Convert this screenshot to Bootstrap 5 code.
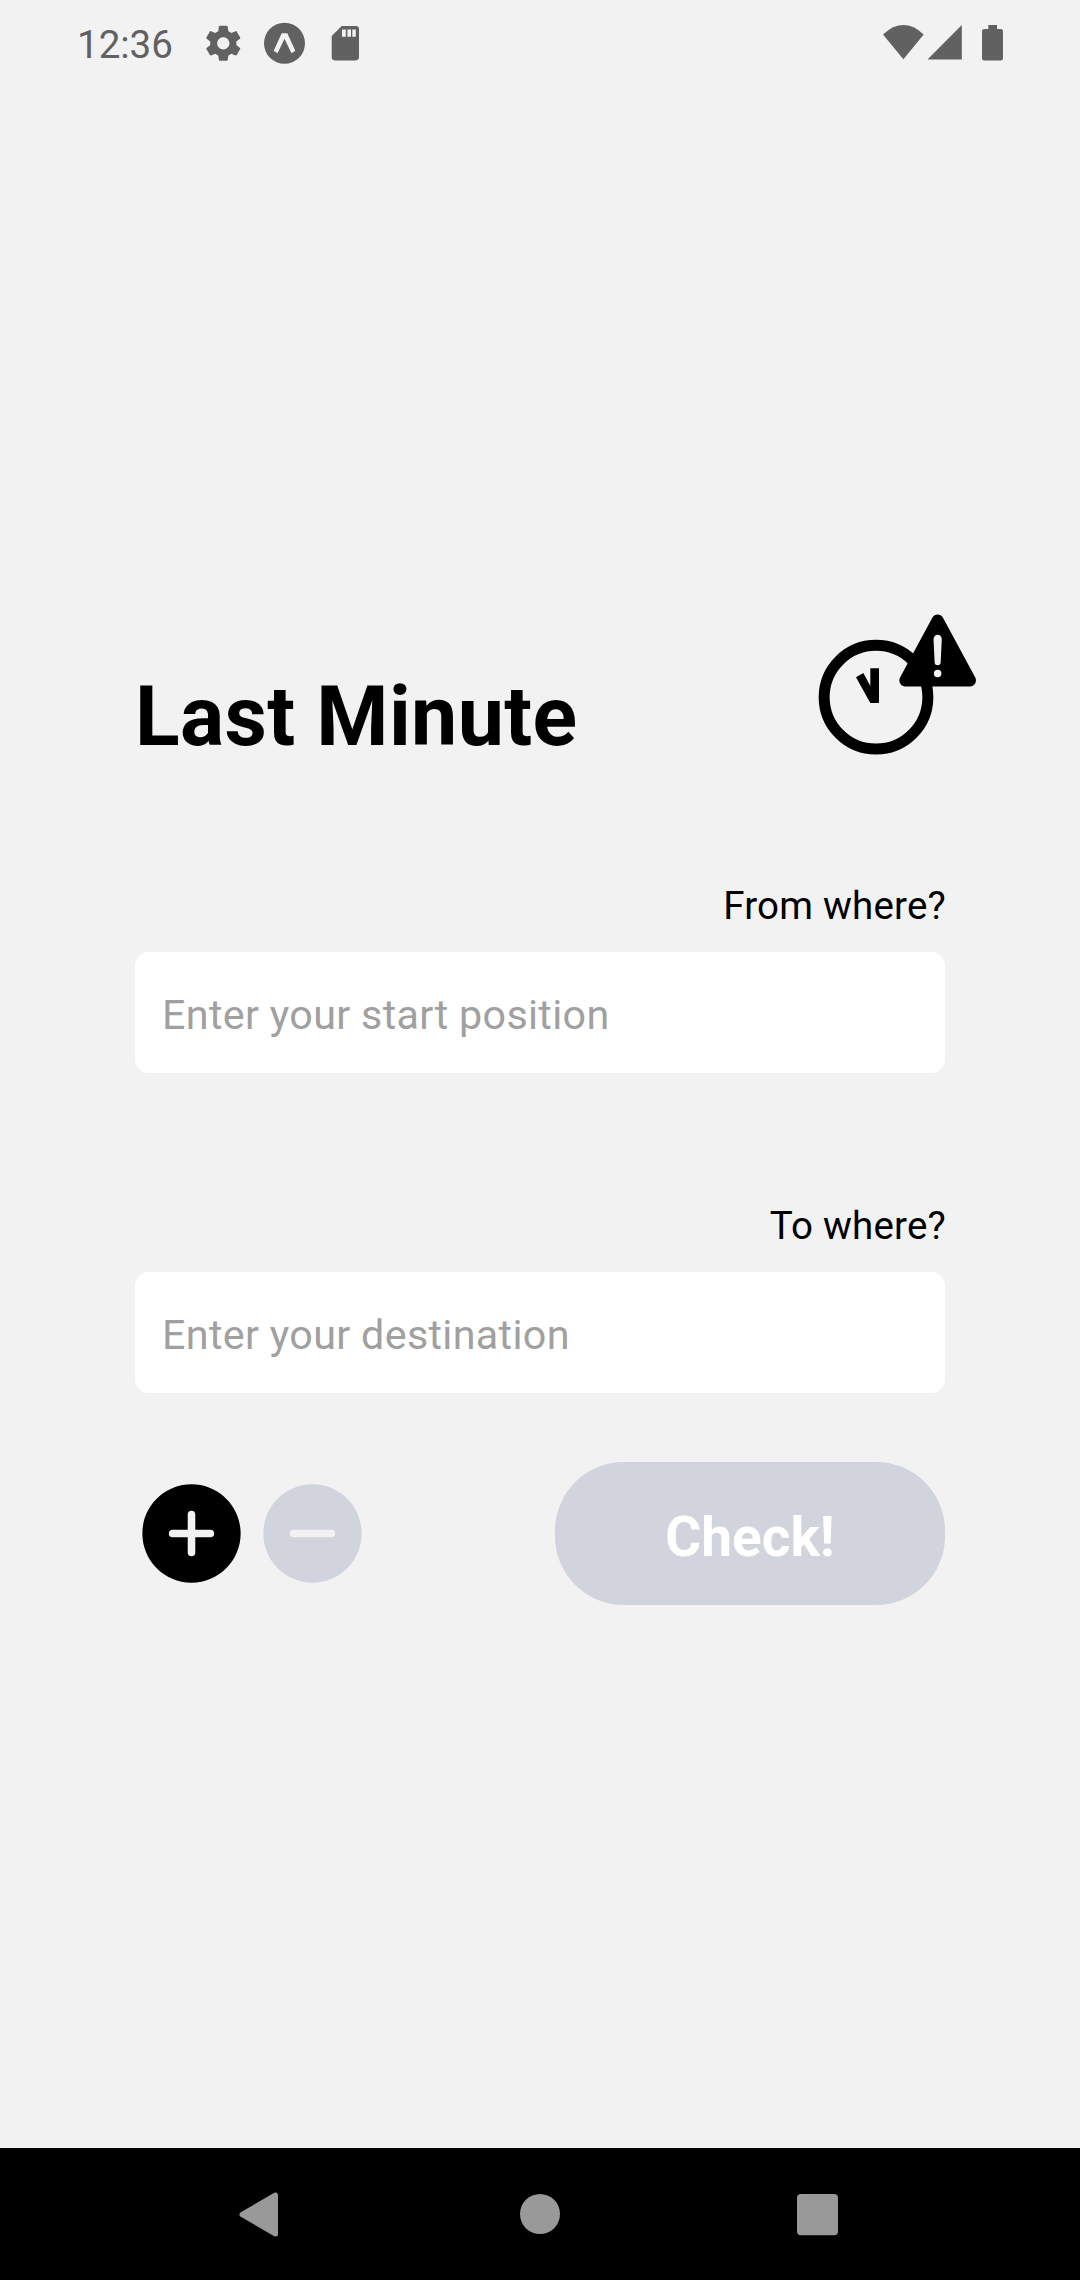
<!DOCTYPE html>
<html lang="en">
<head>
<meta charset="utf-8">
<meta name="viewport" content="width=device-width, initial-scale=1">
<title>Last Minute</title>
<link href="https://cdn.jsdelivr.net/npm/bootstrap@5.3.0/dist/css/bootstrap.min.css" rel="stylesheet">
<style>
  body { background: #f2f2f2; color: #000; font-family: Roboto, "Noto Sans", sans-serif; height: 2280px; overflow: hidden; }
  svg { display: block; flex: none; }
  .status-bar { height: 88px; color: #616161; padding: 0 60px 0 77px; }
  .status-clock { font-size: 38.5px; line-height: 90px; width: 123px; }
  .planner { width: 810px; margin: 0 auto; padding-top: 502px; }
  .app-title { font-size: 82.5px; font-weight: 700; line-height: 97px; letter-spacing: .35px; margin: 78px 0 0; }
  .app-logo { margin-right: -55px; }
  .field-label { font-size: 38.5px; line-height: 46px; letter-spacing: .2px; margin-right: -1px; }
  .field-input.form-control { height: 121px; border: 0; border-radius: 13.75px; padding: 4px 27px 0; font-size: 41.25px; letter-spacing: .33px; background: #fff; margin-top: 23px; }
  .field-input::placeholder { color: #a0a0a0; opacity: 1; }
  .first-field { margin-top: 103px; }
  .next-field { margin-top: 130px; }
  .action-row { margin-top: 69px; }
  .round-btn { width: 121px; height: 121px; color: #000; }
  .round-btn:disabled { color: #d1d4dc; opacity: 1; border: 0; }
  .round-pair { margin-left: -4px; }
  .check-btn.btn { width: 390px; height: 143px; border: 0; border-radius: 68.75px; font-size: 55px; font-weight: 700; line-height: 64px; padding: 7px 0 0; }
  .check-btn.btn:disabled { background: #d1d4dc; color: #fff; opacity: 1; }
  .nav-keys { height: 132px; background: #000; color: #999; }
</style>
</head>
<body class="d-flex flex-column">
  <header class="status-bar d-flex justify-content-between">
    <div class="d-flex">
      <span class="status-clock">12:36</span>
      <svg width="180" height="88" viewBox="200 0 180 88" fill="currentColor" aria-hidden="true">
        <path transform="translate(202.3 22.3) scale(1.75)" d="M19.43 12.98c.04-.32.07-.64.07-.98s-.03-.66-.07-.98l2.11-1.65c.19-.15.24-.42.12-.64l-2-3.46c-.12-.22-.39-.3-.61-.22l-2.49 1c-.52-.4-1.08-.73-1.69-.98l-.38-2.65C14.46 2.18 14.25 2 14 2h-4c-.25 0-.46.18-.49.42l-.38 2.65c-.61.25-1.17.59-1.69.98l-2.49-1c-.23-.09-.49 0-.61.22l-2 3.46c-.13.22-.07.49.12.64l2.11 1.65c-.04.32-.07.65-.07.98s.03.66.07.98l-2.11 1.65c-.19.15-.24.42-.12.64l2 3.46c.12.22.39.3.61.22l2.49-1c.52.4 1.08.73 1.69.98l.38 2.65c.03.24.24.42.49.42h4c.25 0 .46-.18.49-.42l.38-2.65c.61-.25 1.17-.59 1.69-.98l2.49 1c.23.09.49 0 .61-.22l2-3.46c.12-.22.07-.49-.12-.64l-2.11-1.65zM12 15.5c-1.93 0-3.5-1.57-3.5-3.5s1.57-3.5 3.5-3.5 3.5 1.57 3.5 3.5-1.57 3.5-3.5 3.5z"/>
        <circle cx="284.5" cy="43.3" r="20.5"/>
        <path fill="#f2f2f2" d="M281.7 33.3h5.6l8 17.4-3.8 2.6-7-14.5-7 14.5-3.8-2.6z"/>
        <path fill-rule="evenodd" d="M341.7 26h14a3.3 3.3 0 0 1 3.3 3.3v27.8a3.3 3.3 0 0 1-3.3 3.3h-20.7a3.3 3.3 0 0 1-3.3-3.3v-21.1zM342 29.5v7.2h3.8v-7.2zM347.4 29.5v7.2h3.6v-7.2zM352.3 29.5v7.2h3.5v-7.2z"/>
      </svg>
    </div>
    <svg width="160" height="88" viewBox="860 0 160 88" fill="currentColor" aria-hidden="true">
      <path d="M903.4 59.2 883 34.4q20.4-18.8 40.7 0z"/>
      <path d="M927.5 59.5 961.8 25v34.500z"/>
      <path d="M988.3 25h8.7v4h3.7a2.3 2.3 0 0 1 2.3 2.3v27a2.3 2.3 0 0 1-2.3 2.3h-16.4a2.3 2.3 0 0 1-2.3-2.3v-27a2.3 2.3 0 0 1 2.3-2.3h4z"/>
    </svg>
  </header>

  <main class="planner flex-grow-1">
    <div class="d-flex justify-content-between align-items-start">
      <h1 class="app-title">Last Minute</h1>
      <svg class="app-logo" width="210" height="190" viewBox="0 0 630 570" aria-hidden="true">
        <circle cx="258" cy="321.5" r="155.5" fill="none" stroke="#000" stroke-width="33"/>
        <path d="M241 235h26v104h-26l-43-77 22-13 21 39z"/>
        <path transform="translate(300.7 36) scale(.568)" d="M449.07 399.08L278.64 82.58c-12.08-22.44-44.26-22.44-56.35 0L51.87 399.08A32 32 0 0080 446.25h340.89a32 32 0 0028.18-47.17z"/>
        <path fill="#f2f2f2" transform="translate(300.7 36) scale(.568)" d="M250.47 397.25a20 20 0 1120-20 20 20 0 01-20 20zm21.72-201.15l-5.74 122a16 16 0 01-32 0l-5.74-121.95a21.73 21.73 0 0121.5-22.69h.21a21.74 21.74 0 0121.73 22.7z"/>
      </svg>
    </div>

    <div class="first-field">
      <label class="field-label d-block text-end" for="from">From where?</label>
      <input class="field-input form-control shadow-none" id="from" type="text" placeholder="Enter your start position">
    </div>
    <div class="next-field">
      <label class="field-label d-block text-end" for="to">To where?</label>
      <input class="field-input form-control shadow-none" id="to" type="text" placeholder="Enter your destination">
    </div>

    <div class="action-row d-flex justify-content-between align-items-center">
      <div class="round-pair d-flex">
        <button class="round-btn btn p-0 border-0" type="button" aria-label="Add stop">
          <svg width="121" height="121" viewBox="0 0 512 512" fill="currentColor"><path d="M256 48C141.310 48 48 141.310 48 256s93.310 208 208 208 208-93.310 208-208S370.690 48 256 48zm80 224h-64v64a16 16 0 01-32 0v-64h-64a16 16 0 010-32h64v-64a16 16 0 0132 0v64h64a16 16 0 010 32z"/></svg>
        </button>
        <button class="round-btn btn p-0 border-0" type="button" aria-label="Remove stop" disabled>
          <svg width="121" height="121" viewBox="0 0 512 512" fill="currentColor"><path d="M256 48C141.310 48 48 141.310 48 256s93.310 208 208 208 208-93.310 208-208S370.690 48 256 48zm80 224H176a16 16 0 010-32h160a16 16 0 010 32z"/></svg>
        </button>
      </div>
      <button class="check-btn btn" type="button" disabled>Check!</button>
    </div>
  </main>

  <footer class="nav-keys">
    <svg width="1080" height="132" viewBox="0 2148 1080 132" fill="currentColor" aria-hidden="true">
      <path d="M242 2214.5 275.5 2195v39z" stroke="currentColor" stroke-width="5" stroke-linejoin="round"/>
      <circle cx="540" cy="2214" r="20"/>
      <rect x="797" y="2194" width="41" height="41.3" rx="4"/>
    </svg>
  </footer>
<script src="https://cdn.jsdelivr.net/npm/bootstrap@5.3.0/dist/js/bootstrap.bundle.min.js"></script>
</body>
</html>
